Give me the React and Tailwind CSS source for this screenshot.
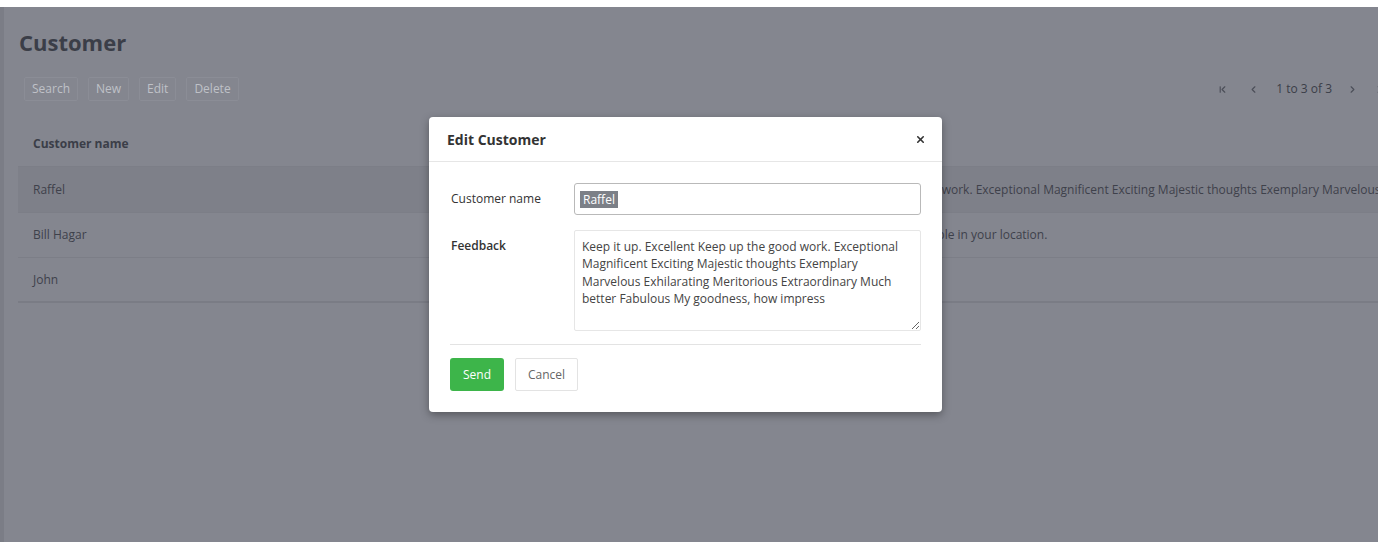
import { ChevronFirst, ChevronLast, ChevronLeft, ChevronRight, X } from 'lucide-react';

const rows = [
  {
    name: 'Raffel',
    feedback:
      'Keep it up. Excellent Keep up the good work. Exceptional Magnificent Exciting Majestic thoughts Exemplary Marvelous Exhilarating Meritorious Extraordinary Much better Fabulous My goodness, how impress',
    selected: true,
  },
  { name: 'Bill Hagar', feedback: "The product you requested isn't available in your location." },
  { name: 'John', feedback: '' },
];

function ToolButton({ children }) {
  return (
    <button className="h-6 px-[7px] border border-[#8b8d96] text-[12px] text-[#bfc1c7] rounded-[2px]">
      {children}
    </button>
  );
}

function EditModal() {
  return (
    <div className="absolute left-[425px] top-[110px] w-[513px] bg-white rounded-[4px] shadow-[0_3px_8px_rgba(0,0,0,0.35)]">
      <div className="h-[45px] pl-[18px] pr-[16px] flex items-center justify-between border-b border-[#e6e6e6]">
        <h2 className="text-[14px] font-bold text-[#333]">Edit Customer</h2>
        <X size={11} strokeWidth={3.5} className="text-[#333]" />
      </div>
      <div className="px-[21px] pt-[21px] pb-[21px]">
        <div className="grid grid-cols-[124px_1fr] gap-y-[15px]">
          <label className="flex items-center pl-px text-[12px] font-medium text-[#333]">Customer name</label>
          <div className="h-[32px] border border-[#b9b9b9] rounded-[3px] flex items-center px-[5px]">
            <span className="bg-[#7c8087] text-white text-[12px] leading-[17px] px-[3px]">Raffel</span>
          </div>
          <label className="pt-[7px] pl-px text-[12px] font-semibold text-[#333]">Feedback</label>
          <textarea
            readOnly
            className="h-[101px] w-full border border-[#e6e6e6] rounded-[2px] px-[7px] pt-[7px] pb-[6px] text-[12px] leading-[17.4px] text-[#444] outline-none"
            defaultValue={rows[0].feedback}
          />
        </div>
        <div className="mt-[13px] border-t border-[#e3e3e3] pt-[13px] flex gap-[11px]">
          <button className="h-[33px] px-[13px] bg-[#3db54a] text-white text-[12px] rounded-[3px]">Send</button>
          <button className="h-[33px] px-[12px] border border-[#e3e3e3] text-[#666] text-[12px] rounded-[2px]">Cancel</button>
        </div>
      </div>
    </div>
  );
}

export default function App() {
  return (
    <div className="w-[1388px] h-[542px] bg-white pt-[7px] pr-[10px] font-['Open_Sans',sans-serif]">
      <div className="relative h-[535px] bg-[#84868f] border-l-4 border-[#7b7d86] overflow-hidden">
        <div className="w-[1410px] pl-[14px]">
          <h1 className="pt-5 pl-px text-[22px] leading-[30px] font-bold text-[#3b3e48]">Customer</h1>
          <div className="mt-5 flex items-center">
            <div className="flex gap-[10px] pl-[6px]">
              <ToolButton>Search</ToolButton>
              <ToolButton>New</ToolButton>
              <ToolButton>Edit</ToolButton>
              <ToolButton>Delete</ToolButton>
            </div>
            <div className="ml-auto flex items-center text-[#4b4e58] pr-[18px]">
              <span className="w-[32px] flex justify-center"><ChevronFirst size={11} strokeWidth={2.5} /></span>
              <span className="w-[30px] flex justify-center"><ChevronLeft size={11} strokeWidth={2.5} /></span>
              <span className="px-[8px] text-[12px] text-[#3b3e48]">1 to 3 of 3</span>
              <span className="w-[24px] flex justify-center"><ChevronRight size={11} strokeWidth={2.5} /></span>
              <span className="w-[32px] flex justify-center"><ChevronLast size={11} strokeWidth={2.5} /></span>
            </div>
          </div>
          <div className="mt-[21px]">
            <div className="grid grid-cols-[698px_1fr] h-[45px] items-center border-b border-[#7c7e87] text-[12px] font-bold text-[#3b3e48]">
              <div className="pl-[15px]">Customer name</div>
              <div className="pl-[8px]">Feedback</div>
            </div>
            {rows.map((r, i) => (
              <div
                key={r.name}
                className={`grid grid-cols-[698px_1fr] h-[45px] items-center text-[12px] text-[#3e414b] ${
                  r.selected ? 'bg-[#7e8089] h-[46px]' : ''
                } ${i === rows.length - 1 ? 'border-b-2 border-[#7a7c85]' : 'border-b border-[#7c7e87]'}`}
              >
                <div className="pl-[15px]">{r.name}</div>
                <div className="pl-[8px] whitespace-nowrap overflow-hidden">{r.feedback}</div>
              </div>
            ))}
          </div>
        </div>
        <EditModal />
      </div>
    </div>
  );
}
